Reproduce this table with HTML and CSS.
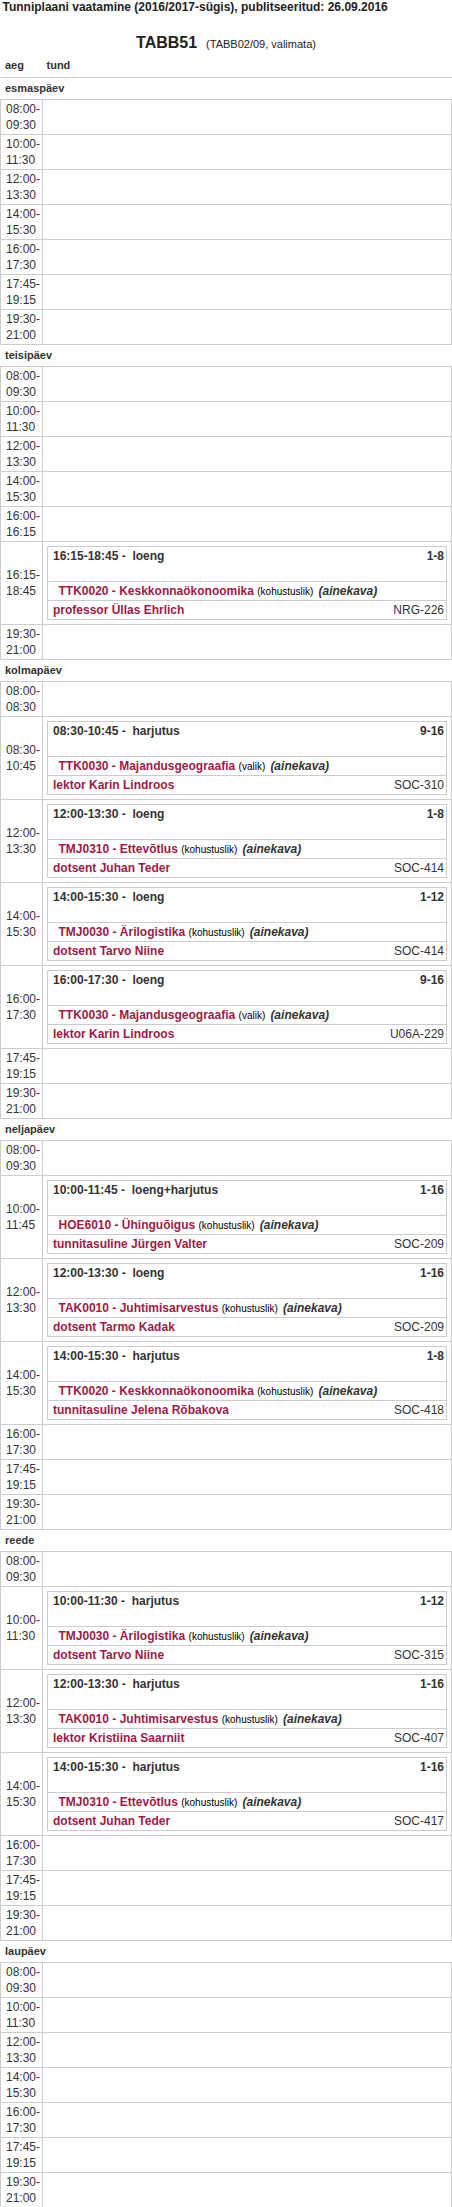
FILE: index.html
```html
<!DOCTYPE html>
<html lang="et">
<head>
<meta charset="utf-8">
<title>Tunniplaan TABB51</title>
<link rel="stylesheet" href="styles.css">
</head>
<body>
<div class="title">Tunniplaani vaatamine (2016/2017-sügis), publitseeritud: 26.09.2016</div>
<div class="group"><span class="group-code">TABB51</span><span class="group-sub">(TABB02/09, valimata)</span></div>
<div class="cols"><span>aeg</span><span>tund</span></div>

<section class="day">
  <div class="day-name">esmaspäev</div>
  <div class="grid">
    <div class="row"><div class="time"><span>08:00-<br>09:30</span></div><div class="slot"></div></div>
    <div class="row"><div class="time"><span>10:00-<br>11:30</span></div><div class="slot"></div></div>
    <div class="row"><div class="time"><span>12:00-<br>13:30</span></div><div class="slot"></div></div>
    <div class="row"><div class="time"><span>14:00-<br>15:30</span></div><div class="slot"></div></div>
    <div class="row"><div class="time"><span>16:00-<br>17:30</span></div><div class="slot"></div></div>
    <div class="row"><div class="time"><span>17:45-<br>19:15</span></div><div class="slot"></div></div>
    <div class="row"><div class="time"><span>19:30-<br>21:00</span></div><div class="slot"></div></div>
  </div>
</section>

<section class="day">
  <div class="day-name">teisipäev</div>
  <div class="grid">
    <div class="row"><div class="time"><span>08:00-<br>09:30</span></div><div class="slot"></div></div>
    <div class="row"><div class="time"><span>10:00-<br>11:30</span></div><div class="slot"></div></div>
    <div class="row"><div class="time"><span>12:00-<br>13:30</span></div><div class="slot"></div></div>
    <div class="row"><div class="time"><span>14:00-<br>15:30</span></div><div class="slot"></div></div>
    <div class="row"><div class="time"><span>16:00-<br>16:15</span></div><div class="slot"></div></div>
    <div class="row"><div class="time"><span>16:15-<br>18:45</span></div>
      <div class="slot slot-ev">
        <div class="ev">
          <div class="ev-head"><span>16:15-18:45 -&nbsp; loeng</span><span>1-8</span></div>
          <div class="ev-course"><span class="cname">TTK0020 - Keskkonnaökonoomika</span> <span class="req">(kohustuslik)</span> <span class="plan">(ainekava)</span></div>
          <div class="ev-teacher"><span class="tname">professor Üllas Ehrlich</span><span class="room">NRG-226</span></div>
        </div>
      </div>
    </div>
    <div class="row"><div class="time"><span>19:30-<br>21:00</span></div><div class="slot"></div></div>
  </div>
</section>

<section class="day">
  <div class="day-name">kolmapäev</div>
  <div class="grid">
    <div class="row"><div class="time"><span>08:00-<br>08:30</span></div><div class="slot"></div></div>
    <div class="row"><div class="time"><span>08:30-<br>10:45</span></div>
      <div class="slot slot-ev">
        <div class="ev">
          <div class="ev-head"><span>08:30-10:45 -&nbsp; harjutus</span><span>9-16</span></div>
          <div class="ev-course"><span class="cname">TTK0030 - Majandusgeograafia</span> <span class="req">(valik)</span> <span class="plan">(ainekava)</span></div>
          <div class="ev-teacher"><span class="tname">lektor Karin Lindroos</span><span class="room">SOC-310</span></div>
        </div>
      </div>
    </div>
    <div class="row"><div class="time"><span>12:00-<br>13:30</span></div>
      <div class="slot slot-ev">
        <div class="ev">
          <div class="ev-head"><span>12:00-13:30 -&nbsp; loeng</span><span>1-8</span></div>
          <div class="ev-course"><span class="cname">TMJ0310 - Ettevõtlus</span> <span class="req">(kohustuslik)</span> <span class="plan">(ainekava)</span></div>
          <div class="ev-teacher"><span class="tname">dotsent Juhan Teder</span><span class="room">SOC-414</span></div>
        </div>
      </div>
    </div>
    <div class="row"><div class="time"><span>14:00-<br>15:30</span></div>
      <div class="slot slot-ev">
        <div class="ev">
          <div class="ev-head"><span>14:00-15:30 -&nbsp; loeng</span><span>1-12</span></div>
          <div class="ev-course"><span class="cname">TMJ0030 - Ärilogistika</span> <span class="req">(kohustuslik)</span> <span class="plan">(ainekava)</span></div>
          <div class="ev-teacher"><span class="tname">dotsent Tarvo Niine</span><span class="room">SOC-414</span></div>
        </div>
      </div>
    </div>
    <div class="row"><div class="time"><span>16:00-<br>17:30</span></div>
      <div class="slot slot-ev">
        <div class="ev">
          <div class="ev-head"><span>16:00-17:30 -&nbsp; loeng</span><span>9-16</span></div>
          <div class="ev-course"><span class="cname">TTK0030 - Majandusgeograafia</span> <span class="req">(valik)</span> <span class="plan">(ainekava)</span></div>
          <div class="ev-teacher"><span class="tname">lektor Karin Lindroos</span><span class="room">U06A-229</span></div>
        </div>
      </div>
    </div>
    <div class="row"><div class="time"><span>17:45-<br>19:15</span></div><div class="slot"></div></div>
    <div class="row"><div class="time"><span>19:30-<br>21:00</span></div><div class="slot"></div></div>
  </div>
</section>

<section class="day">
  <div class="day-name">neljapäev</div>
  <div class="grid">
    <div class="row"><div class="time"><span>08:00-<br>09:30</span></div><div class="slot"></div></div>
    <div class="row"><div class="time"><span>10:00-<br>11:45</span></div>
      <div class="slot slot-ev">
        <div class="ev">
          <div class="ev-head"><span>10:00-11:45 -&nbsp; loeng+harjutus</span><span>1-16</span></div>
          <div class="ev-course"><span class="cname">HOE6010 - Ühinguõigus</span> <span class="req">(kohustuslik)</span> <span class="plan">(ainekava)</span></div>
          <div class="ev-teacher"><span class="tname">tunnitasuline Jürgen Valter</span><span class="room">SOC-209</span></div>
        </div>
      </div>
    </div>
    <div class="row"><div class="time"><span>12:00-<br>13:30</span></div>
      <div class="slot slot-ev">
        <div class="ev">
          <div class="ev-head"><span>12:00-13:30 -&nbsp; loeng</span><span>1-16</span></div>
          <div class="ev-course"><span class="cname">TAK0010 - Juhtimisarvestus</span> <span class="req">(kohustuslik)</span> <span class="plan">(ainekava)</span></div>
          <div class="ev-teacher"><span class="tname">dotsent Tarmo Kadak</span><span class="room">SOC-209</span></div>
        </div>
      </div>
    </div>
    <div class="row"><div class="time"><span>14:00-<br>15:30</span></div>
      <div class="slot slot-ev">
        <div class="ev">
          <div class="ev-head"><span>14:00-15:30 -&nbsp; harjutus</span><span>1-8</span></div>
          <div class="ev-course"><span class="cname">TTK0020 - Keskkonnaökonoomika</span> <span class="req">(kohustuslik)</span> <span class="plan">(ainekava)</span></div>
          <div class="ev-teacher"><span class="tname">tunnitasuline Jelena Rõbakova</span><span class="room">SOC-418</span></div>
        </div>
      </div>
    </div>
    <div class="row"><div class="time"><span>16:00-<br>17:30</span></div><div class="slot"></div></div>
    <div class="row"><div class="time"><span>17:45-<br>19:15</span></div><div class="slot"></div></div>
    <div class="row"><div class="time"><span>19:30-<br>21:00</span></div><div class="slot"></div></div>
  </div>
</section>

<section class="day">
  <div class="day-name">reede</div>
  <div class="grid">
    <div class="row"><div class="time"><span>08:00-<br>09:30</span></div><div class="slot"></div></div>
    <div class="row"><div class="time"><span>10:00-<br>11:30</span></div>
      <div class="slot slot-ev">
        <div class="ev">
          <div class="ev-head"><span>10:00-11:30 -&nbsp; harjutus</span><span>1-12</span></div>
          <div class="ev-course"><span class="cname">TMJ0030 - Ärilogistika</span> <span class="req">(kohustuslik)</span> <span class="plan">(ainekava)</span></div>
          <div class="ev-teacher"><span class="tname">dotsent Tarvo Niine</span><span class="room">SOC-315</span></div>
        </div>
      </div>
    </div>
    <div class="row"><div class="time"><span>12:00-<br>13:30</span></div>
      <div class="slot slot-ev">
        <div class="ev">
          <div class="ev-head"><span>12:00-13:30 -&nbsp; harjutus</span><span>1-16</span></div>
          <div class="ev-course"><span class="cname">TAK0010 - Juhtimisarvestus</span> <span class="req">(kohustuslik)</span> <span class="plan">(ainekava)</span></div>
          <div class="ev-teacher"><span class="tname">lektor Kristiina Saarniit</span><span class="room">SOC-407</span></div>
        </div>
      </div>
    </div>
    <div class="row"><div class="time"><span>14:00-<br>15:30</span></div>
      <div class="slot slot-ev">
        <div class="ev">
          <div class="ev-head"><span>14:00-15:30 -&nbsp; harjutus</span><span>1-16</span></div>
          <div class="ev-course"><span class="cname">TMJ0310 - Ettevõtlus</span> <span class="req">(kohustuslik)</span> <span class="plan">(ainekava)</span></div>
          <div class="ev-teacher"><span class="tname">dotsent Juhan Teder</span><span class="room">SOC-417</span></div>
        </div>
      </div>
    </div>
    <div class="row"><div class="time"><span>16:00-<br>17:30</span></div><div class="slot"></div></div>
    <div class="row"><div class="time"><span>17:45-<br>19:15</span></div><div class="slot"></div></div>
    <div class="row"><div class="time"><span>19:30-<br>21:00</span></div><div class="slot"></div></div>
  </div>
</section>

<section class="day">
  <div class="day-name">laupäev</div>
  <div class="grid">
    <div class="row"><div class="time"><span>08:00-<br>09:30</span></div><div class="slot"></div></div>
    <div class="row"><div class="time"><span>10:00-<br>11:30</span></div><div class="slot"></div></div>
    <div class="row"><div class="time"><span>12:00-<br>13:30</span></div><div class="slot"></div></div>
    <div class="row"><div class="time"><span>14:00-<br>15:30</span></div><div class="slot"></div></div>
    <div class="row"><div class="time"><span>16:00-<br>17:30</span></div><div class="slot"></div></div>
    <div class="row"><div class="time"><span>17:45-<br>19:15</span></div><div class="slot"></div></div>
    <div class="row"><div class="time"><span>19:30-<br>21:00</span></div><div class="slot"></div></div>
  </div>
</section>
</body>
</html>
```

FILE: styles.css
```css
* {
  box-sizing: border-box;
}

body {
  margin: 0;
  background: #fff;
  color: #333;
  font-family: "Liberation Sans", Arial, sans-serif;
}

.title {
  padding-left: 2.5px;
  font-size: 12px;
  font-weight: bold;
  line-height: 15px;
  color: #222;
  white-space: nowrap;
}

.group {
  margin-top: 18px;
  line-height: 20px;
  text-align: center;
  color: #222;
}

.group-code {
  font-size: 16px;
  font-weight: bold;
}

.group-sub {
  margin-left: 9px;
  font-size: 11px;
}

.cols {
  display: grid;
  grid-template-columns: 42px 1fr;
  padding: 4.2px 0 3.8px;
  border-bottom: 1px solid #ccc;
  font-size: 11px;
  font-weight: bold;
  line-height: 15px;
}

.cols span:first-child {
  padding-left: 5px;
}

.cols span:last-child {
  padding-left: 4.5px;
}

.day-name {
  padding: 0 0 1px 5px;
  font-size: 11px;
  font-weight: bold;
  line-height: 20px;
}

.grid {
  border: 1px solid #ccc;
}

.row {
  display: grid;
  grid-template-columns: 42px 1fr;
  min-height: 35px;
  border-top: 1px solid #ccc;
}

.row:first-child {
  min-height: 34px;
  border-top: 0;
}

.time {
  display: flex;
  align-items: center;
  padding-left: 5px;
  border-right: 1px solid #ccc;
  font-size: 12px;
  line-height: 16px;
}

.slot-ev {
  padding: 4px;
}

.ev {
  border: 1px solid #ccc;
}

.ev-head {
  display: flex;
  justify-content: space-between;
  height: 35px;
  padding: 1px 2px 0 5px;
  border-bottom: 1px solid #ccc;
  font-size: 12px;
  font-weight: bold;
  line-height: 16px;
  white-space: nowrap;
}

.ev-course {
  height: 19px;
  padding-left: 10.5px;
  border-bottom: 1px solid #ccc;
  font-size: 12px;
  font-weight: bold;
  line-height: 18px;
  white-space: nowrap;
}

.cname,
.tname {
  color: #9e1a47;
}

.req {
  font-size: 10px;
  font-weight: normal;
  color: #000;
}

.plan {
  margin-left: 1.8px;
  font-style: italic;
  color: #333;
}

.ev-teacher {
  display: flex;
  justify-content: space-between;
  height: 18px;
  padding: 0 2px 0 5px;
  font-size: 12px;
  line-height: 18px;
  white-space: nowrap;
}

.tname {
  font-weight: bold;
}

.room {
  color: #333;
}
```
